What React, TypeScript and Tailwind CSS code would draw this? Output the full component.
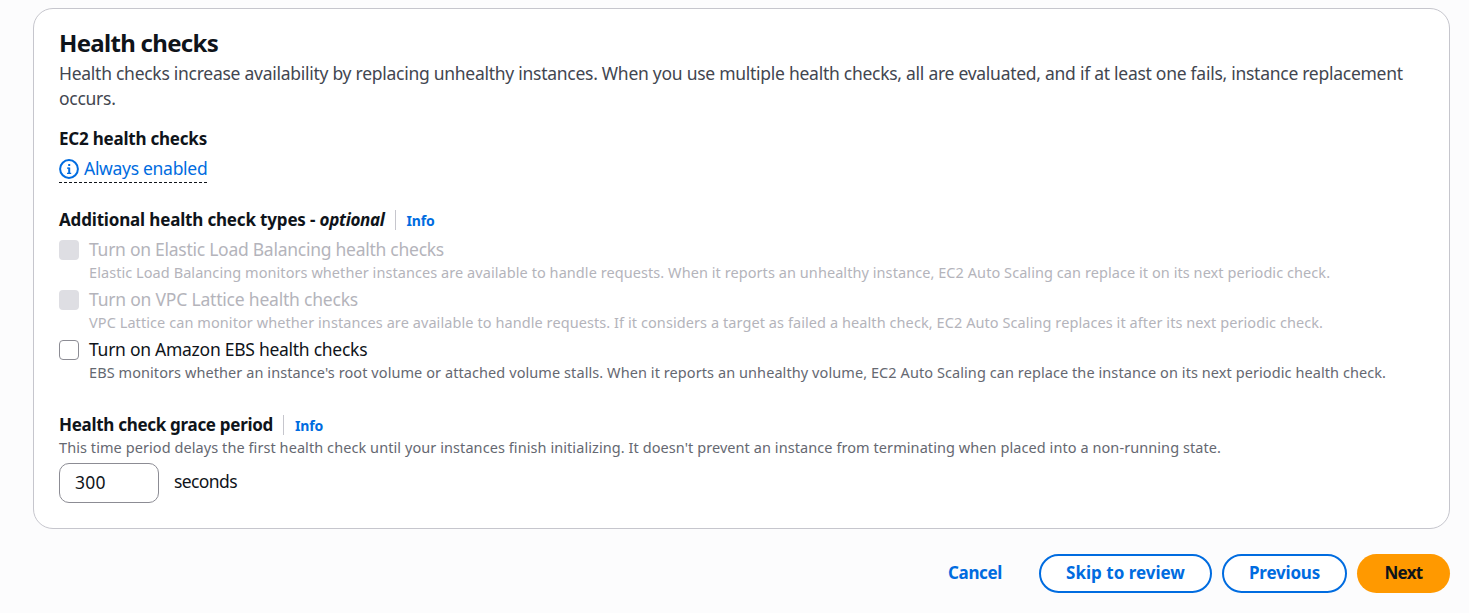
import type { ReactNode } from "react";

function InfoLink() {
  return (
    <a
      href="#info"
      className="mt-px ml-[10px] flex h-5 items-center border-l border-[#c6c6cd] pl-[11px] text-[14px] font-bold tracking-[-0.18px] text-[#006ce0]"
    >
      Info
    </a>
  );
}

type CheckProps = {
  label: string;
  labelClass: string;
  descriptionClass: string;
  disabled?: boolean;
  children: ReactNode;
};

function CheckRow({ label, labelClass, descriptionClass, disabled, children }: CheckProps) {
  return (
    <div className="flex h-[50px]">
      <span
        role="checkbox"
        aria-checked="false"
        aria-disabled={disabled}
        className={
          disabled
            ? "mt-[3px] size-5 shrink-0 rounded-[4px] bg-[#dedee3]"
            : "mt-[3px] size-5 shrink-0 rounded-[4px] border border-[#8c8c94] bg-white"
        }
      />
      <div className="ml-[10px] whitespace-nowrap">
        <div className={`text-[17.5px] leading-[25px] ${disabled ? "text-[#b4b4bb]" : "text-[#0f141a]"} ${labelClass}`}>{label}</div>
        <div className={`text-[14.5px] leading-5 ${disabled ? "text-[#b4b4bb]" : "text-[#656871]"} ${descriptionClass}`}>
          {children}
        </div>
      </div>
    </div>
  );
}

export default function App() {
  return (
    <div className="h-[613px] overflow-hidden bg-[#fcfcfd] pt-2 pr-[19px] pl-[33px] font-['Noto_Sans',sans-serif] text-[#0f141a]">
      <section className="h-[521px] rounded-[20px] border border-[#c6c6cd] bg-white px-[25px] pt-[19px]">
        <h2 className="text-[24px] leading-[30px] font-bold tracking-[-0.7px]">Health checks</h2>
        <p className="mt-[3px] text-[17.5px] leading-[25px] tracking-[-0.27px] text-[#424650]">
          Health checks increase availability by replacing unhealthy instances. When you use multiple health checks, all
          are evaluated, and if at least one fails, instance replacement occurs.
        </p>

        <h3 className="mt-[15px] text-[17px] leading-[25px] font-bold tracking-[-0.217px]">EC2 health checks</h3>
        <div className="mt-[5px] flex h-[26px] w-[149px] items-start">
          <svg viewBox="0 0 20 20" className="mt-[3px] size-5 shrink-0" fill="none" stroke="#006ce0" strokeWidth="2">
            <circle cx="10" cy="10" r="8.9" />
            <path d="M10.2 8.6V15" />
            <path d="M8 9.2H10.5M8 14.4H12.2" strokeWidth="1.2" />
            <path d="M10.2 5v2" />
          </svg>
          <span className="ml-[5px] text-[17.5px] leading-[25px] tracking-[-0.3px] whitespace-nowrap text-[#006ce0]">
            Always enabled
          </span>
        </div>
        <svg width="148" height="1" className="block" aria-hidden="true">
          <path d="M0 .5H148" stroke="#0f141a" strokeDasharray="3 2" />
        </svg>

        <div className="mt-[24px] flex h-[25px] items-center whitespace-nowrap">
          <h3 className="text-[17px] leading-[25px] font-bold tracking-[-0.17px]">
            Additional health check types - <i className="tracking-[-0.3px]">optional</i>
          </h3>
          <InfoLink />
        </div>

        <div className="mt-[5px]">
          <CheckRow
            disabled
            label="Turn on Elastic Load Balancing health checks"
            labelClass="tracking-[-0.265px]"
            descriptionClass="tracking-[0.066px]"
          >
            Elastic Load Balancing monitors whether instances are available to handle requests. When it reports an
            unhealthy instance, EC2 Auto Scaling can replace it on its next periodic check.
          </CheckRow>
          <CheckRow
            disabled
            label="Turn on VPC Lattice health checks"
            labelClass="tracking-[-0.205px]"
            descriptionClass="tracking-[0.078px]"
          >
            VPC Lattice can monitor whether instances are available to handle requests. If it considers a target as
            failed a health check, EC2 Auto Scaling replaces it after its next periodic check.
          </CheckRow>
          <CheckRow
            label="Turn on Amazon EBS health checks"
            labelClass="tracking-[-0.27px]"
            descriptionClass="tracking-[0.077px]"
          >
            EBS monitors whether an instance's root volume or attached volume stalls. When it reports an unhealthy
            volume, EC2 Auto Scaling can replace the instance on its next periodic health check.
          </CheckRow>
        </div>

        <div className="mt-[25px] flex h-[25px] items-center whitespace-nowrap">
          <h3 className="text-[17px] leading-[25px] font-bold tracking-[-0.297px]">Health check grace period</h3>
          <InfoLink />
        </div>
        <p className="text-[14.5px] leading-5 tracking-[0.073px] whitespace-nowrap text-[#656871]">
          This time period delays the first health check until your instances finish initializing. It doesn't prevent an
          instance from terminating when placed into a non-running state.
        </p>
        <div className="mt-[6px] flex h-10 items-start">
          <input
            defaultValue="300"
            className="h-10 w-[100px] rounded-[10px] border border-[#8c8c94] bg-white pb-[2px] pl-[15px] text-[17.5px] tracking-[0.3px] text-[#0f141a]"
          />
          <span className="mt-[6px] ml-[15px] text-[17.5px] leading-[25px] tracking-[-0.6px]">seconds</span>
        </div>
      </section>

      <div className="mt-[25px] flex h-[39px] justify-end gap-[10px] text-[17px] font-bold whitespace-nowrap">
        <button className="w-[108px] pb-px tracking-[-0.356px] text-[#006ce0]">Cancel</button>
        <button className="w-[173px] rounded-full border-2 border-[#006ce0] bg-white pb-px text-[#006ce0]">
          Skip to review
        </button>
        <button className="w-[125px] rounded-full border-2 border-[#006ce0] bg-white pb-px tracking-[-0.203px] text-[#006ce0]">
          Previous
        </button>
        <button className="w-[93px] rounded-full bg-[#ff9900] pb-px tracking-[-0.7px] text-[#0f141a]">Next</button>
      </div>
    </div>
  );
}
